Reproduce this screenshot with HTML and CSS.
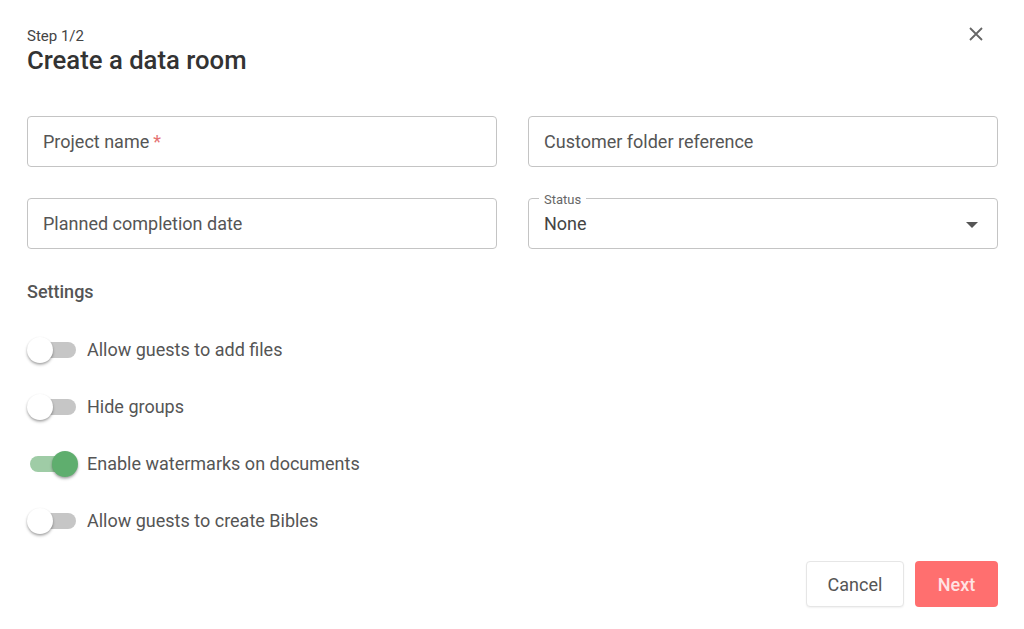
FILE: index.html
```html
<!DOCTYPE html>
<html lang="en">
<head>
<meta charset="utf-8">
<title>Create a data room</title>
<link rel="stylesheet" href="styles.css">
</head>
<body>
<div class="dialog">
  <header class="head">
    <div class="titles">
      <div class="step">Step 1/2</div>
      <h1 class="title">Create a data room</h1>
    </div>
    <button class="close" aria-label="Close">
      <svg width="16" height="16" viewBox="0 0 16 16"><path d="M2 2 L14 14 M14 2 L2 14" stroke="#666" stroke-width="1.8" fill="none"/></svg>
    </button>
  </header>

  <div class="fields">
    <div class="field"><span class="ph">Project name</span><span class="req">*</span></div>
    <div class="field"><span class="ph">Customer folder reference</span></div>
    <div class="field"><span class="ph">Planned completion date</span></div>
    <div class="field select">
      <span class="legend">Status</span>
      <span class="val">None</span>
      <span class="caret"></span>
    </div>
  </div>

  <div class="settings-title">Settings</div>
  <ul class="toggles">
    <li class="toggle"><span class="sw"><span class="track"></span><span class="thumb"></span></span><span class="lbl">Allow guests to add files</span></li>
    <li class="toggle"><span class="sw"><span class="track"></span><span class="thumb"></span></span><span class="lbl">Hide groups</span></li>
    <li class="toggle on"><span class="sw"><span class="track"></span><span class="thumb"></span></span><span class="lbl">Enable watermarks on documents</span></li>
    <li class="toggle"><span class="sw"><span class="track"></span><span class="thumb"></span></span><span class="lbl">Allow guests to create Bibles</span></li>
  </ul>

  <footer class="actions">
    <button class="btn cancel">Cancel</button>
    <button class="btn next">Next</button>
  </footer>
</div>
</body>
</html>
```
FILE: styles.css
```css
* { box-sizing: border-box; }
html, body { margin: 0; padding: 0; background: #fff; }
body { font-family: Roboto, "Liberation Sans", Arial, sans-serif; color: #555; }

.dialog { width: 1024px; height: 629px; padding: 0 26px 0 27px; }

.head { display: flex; justify-content: space-between; align-items: flex-start; padding-top: 28px; }
.step { font-size: 15px; line-height: 17px; color: #444; }
.title { margin: 0; font-size: 25.7px; font-weight: 500; line-height: 30px; color: #333; }
.close { border: 0; background: none; padding: 0; margin: -2px 14px 0 0; width: 16px; height: 16px; cursor: pointer; }
.close svg { display: block; }

.fields { display: grid; grid-template-columns: 1fr 1fr; column-gap: 31px; row-gap: 31px; margin-top: 41px; }
.field { position: relative; height: 51px; border: 1px solid #c4c4c4; border-radius: 4px; display: flex; align-items: center; padding: 0 15px; font-size: 18px; color: #555; }
.req { color: #e57373; margin-left: 4px; }
.select .legend { position: absolute; top: -6px; left: 10px; padding: 0 5px; background: #fff; font-size: 13px; line-height: 13px; color: #666; }
.select .val { color: #444; }
.caret { position: absolute; right: 19px; top: 23px; width: 0; height: 0; border-left: 6px solid transparent; border-right: 6px solid transparent; border-top: 6px solid #555; }

.settings-title { margin-top: 33px; font-size: 18px; font-weight: 500; line-height: 20px; color: #555; }

.toggles { list-style: none; margin: 19px 0 0; padding: 0; }
.toggle { height: 57px; display: flex; align-items: center; }
.sw { position: relative; width: 50px; height: 28px; margin-right: 10px; flex: none; }
.track { position: absolute; left: 3px; top: 6px; width: 46px; height: 16px; border-radius: 8px; background: #c6c6c6; }
.thumb { position: absolute; left: 0; top: 1px; width: 26px; height: 26px; border-radius: 50%; background: #fff; box-shadow: 0 2px 3px rgba(0,0,0,0.25), 0 1px 2px rgba(0,0,0,0.15); }
.toggle.on .track { background: #9fcca6; }
.toggle.on .thumb { left: 25px; background: #5fae6e; }
.lbl { font-size: 18px; color: #555; }

.actions { display: flex; justify-content: flex-end; gap: 11px; margin-top: 12px; }
.btn { height: 46px; border-radius: 4px; font-family: inherit; font-size: 18px; cursor: pointer; }
.cancel { width: 98px; background: #fff; border: 1px solid #e6e6e6; color: #555; font-weight: 400; box-shadow: 0 1px 2px rgba(0,0,0,0.06); }
.next { width: 83px; background: #ff6f6f; border: 0; color: #ffe3e3; font-weight: 500; }
```
